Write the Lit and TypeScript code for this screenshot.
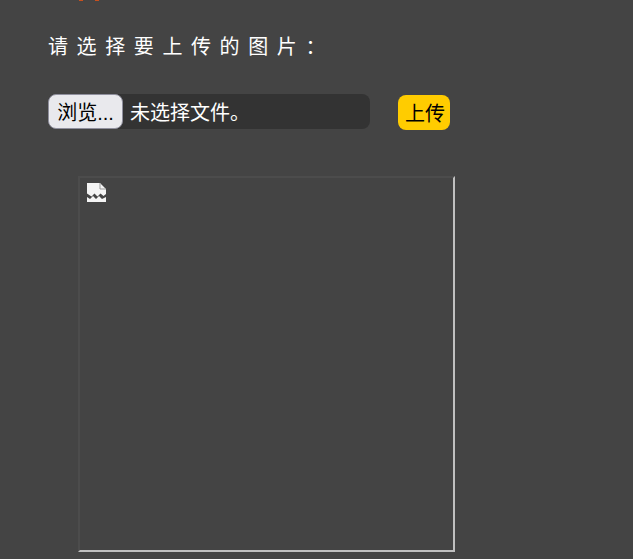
import { LitElement, css, html } from "lit";
import { customElement } from "lit/decorators.js";

@customElement("app-root")
export class AppRoot extends LitElement {
  static styles = css`
    :host {
      display: block;
      height: 559px;
      overflow: hidden;
      background: #444444;
      color: #fff;
      font-family: "Liberation Sans", "Noto Sans CJK SC", sans-serif;
    }

    .clipped {
      height: 2px;
      overflow: hidden;
      padding-left: 79px;
      display: flex;
      gap: 12px;
    }

    .clipped i {
      display: block;
      width: 4px;
      height: 1px;
      background: #c8501e;
    }

    .page {
      display: flex;
      flex-direction: column;
      padding: 33px 0 0 48px;
    }

    .title {
      margin: 0;
      font-size: 20px;
      font-weight: 400;
      line-height: 24px;
      letter-spacing: 8.6px;
    }

    .row {
      display: flex;
      align-items: flex-start;
      margin-top: 35px;
    }

    .file {
      display: flex;
      align-items: center;
      width: 322px;
      height: 35px;
      border-radius: 8px;
      background: #333333;
      font-size: 20px;
    }

    .browse {
      box-sizing: border-box;
      width: 75px;
      height: 35px;
      padding: 0;
      border: 1px solid #8f8f9d;
      border-radius: 8px;
      background: #e9e9ed;
      color: #000;
      font: inherit;
    }

    .file span {
      margin-left: 7px;
    }

    .upload {
      box-sizing: border-box;
      width: 52px;
      height: 35px;
      margin: 1px 0 0 28px;
      padding: 0 0 0 2px;
      border: none;
      border-radius: 8px;
      background: #ffcc00;
      color: #000;
      font: inherit;
      font-size: 20px;
    }

    .preview {
      box-sizing: border-box;
      width: 377px;
      height: 376px;
      margin: 46px 0 0 30px;
      padding: 5px 7px;
      border-style: solid;
      border-width: 2px;
      border-color: #4c4c4c #c0c0c0 #c0c0c0 #4c4c4c;
    }

    .preview svg {
      display: block;
    }
  `;

  render() {
    return html`
      <div class="clipped"><i></i><i></i></div>
      <div class="page">
        <h2 class="title">请选择要上传的图片：</h2>
        <div class="row">
          <div class="file">
            <button class="browse">浏览...</button>
            <span>未选择文件。</span>
          </div>
          <button class="upload">上传</button>
        </div>
        <div class="preview">
          <svg width="20" height="20" viewBox="0 0 20 20">
            <path fill="#f4f4f4" d="M0 0h13l6 6v5l-2.500 2-3-2.500-3 3-3-3-3 3-4.500-3z" />
            <path fill="none" stroke="#999" d="M13 0v6h6" />
            <path fill="#f4f4f4" d="M0 19v-5l3 2 3-3 3 3 3-3 3 3 4-2v5z" />
          </svg>
        </div>
      </div>
    `;
  }
}
